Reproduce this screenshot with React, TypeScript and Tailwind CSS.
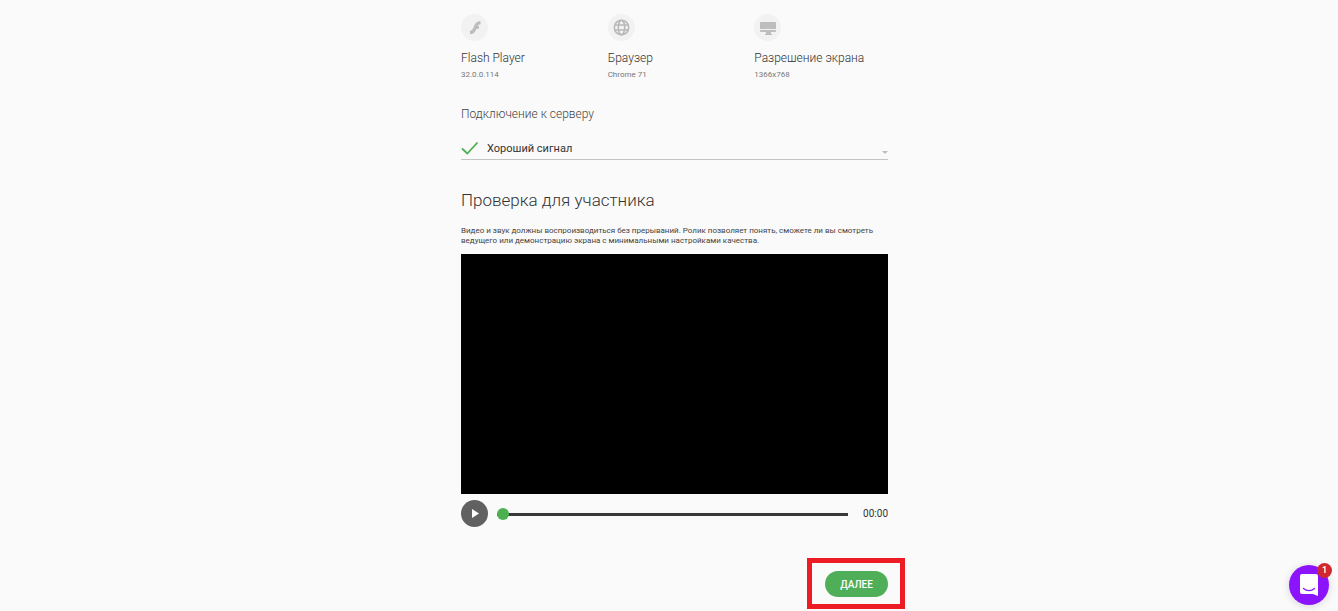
import { useState, type ReactNode } from 'react';

interface SystemItem {
    title: string;
    value: string;
    icon: ReactNode;
}

const systemItems: SystemItem[] = [
    {
        title: 'Flash Player',
        value: '32.0.0.114',
        icon: (
            <svg width="27" height="27" viewBox="0 0 27 27" fill="none" aria-hidden="true">
                <path d="M19.500 8.600c-3.300.2-4.500 2.300-5.400 5.200-.9 2.500-1.900 4.500-5.100 4.800" stroke="#bdbdbd" strokeWidth="3.400" />
                <path d="M13 13.400h5" stroke="#bdbdbd" strokeWidth="2.800" />
            </svg>
        ),
    },
    {
        title: 'Браузер',
        value: 'Chrome 71',
        icon: (
            <svg width="27" height="27" viewBox="0 0 27 27" fill="none" stroke="#b8b8b8" strokeWidth="1.600" aria-hidden="true">
                <circle cx="13.500" cy="13.500" r="7.200" />
                <ellipse cx="13.500" cy="13.500" rx="3.200" ry="7.200" />
                <path d="M7 11h13M7 16h13" />
            </svg>
        ),
    },
    {
        title: 'Разрешение экрана',
        value: '1366x768',
        icon: (
            <svg width="27" height="27" viewBox="0 0 27 27" fill="#bdbdbd" aria-hidden="true">
                <path d="M6 9a1 1 0 0 1 1-1h14a1 1 0 0 1 1 1v6H6z" />
                <path d="M6 16h16v1a1 1 0 0 1-1 1h-4v2h1v1h-7v-1h1v-2H7a1 1 0 0 1-1-1z" />
            </svg>
        ),
    },
];

function SystemInfo() {
    return (
        <div className="grid grid-cols-3 gap-[13px]">
            {systemItems.map((item) => (
                <div key={item.title}>
                    <div className="size-[27px] rounded-full bg-[#f2f2f2]">{item.icon}</div>
                    <div className="mt-2 text-[12px] leading-[18px] font-light whitespace-nowrap text-[#333]">{item.title}</div>
                    <div className="mt-[3px] text-[8px] leading-[10px] text-[#777]">{item.value}</div>
                </div>
            ))}
        </div>
    );
}

function ServerSelect() {
    return (
        <div className="mt-[25px]">
            <label htmlFor="server" className="block text-[12px] leading-[18px] font-light text-[#444]">
                Подключение к серверу
            </label>
            <div className="relative mt-4 border-b border-[#c4c4c4]">
                <svg className="pointer-events-none absolute top-[2px] left-0" width="18" height="14" viewBox="0 0 18 14" fill="none" aria-hidden="true">
                    <path d="M1 7.500 6.300 12.500 16.500 1.500" stroke="#4caf50" strokeWidth="1.800" />
                </svg>
                <select id="server" className="block h-5 w-full appearance-none bg-transparent pl-[26px] text-[11px] text-[#333] outline-none">
                    <option>Хороший сигнал</option>
                </select>
                <svg className="pointer-events-none absolute right-0 bottom-[5px]" width="6" height="3" viewBox="0 0 6 3" fill="#bdbdbd" aria-hidden="true">
                    <path d="M0 0h6L3 3z" />
                </svg>
            </div>
        </div>
    );
}

function Player() {
    const [position, setPosition] = useState(0);

    return (
        <div>
            <div className="mt-2 h-60 bg-black" />
            <div className="mt-[6px] flex items-center">
                <button type="button" aria-label="Воспроизвести" className="size-[27px] shrink-0 rounded-full bg-[#616161]">
                    <svg width="27" height="27" viewBox="0 0 27 27" fill="#fff" aria-hidden="true">
                        <path d="M11 9v9l7-4.500z" />
                    </svg>
                </button>
                <input
                    type="range"
                    aria-label="Позиция"
                    min={0}
                    max={100}
                    value={position}
                    onChange={(e) => setPosition(Number(e.target.value))}
                    className="mt-px ml-[9px] h-3 min-w-0 flex-1 appearance-none bg-transparent [&::-webkit-slider-runnable-track]:h-[3px] [&::-webkit-slider-runnable-track]:bg-[#383838] [&::-webkit-slider-thumb]:mt-[-5px] [&::-webkit-slider-thumb]:size-3 [&::-webkit-slider-thumb]:appearance-none [&::-webkit-slider-thumb]:rounded-full [&::-webkit-slider-thumb]:bg-[#4caf50]"
                />
                <span className="ml-[15px] text-[10px] leading-3 text-[#333]">00:00</span>
            </div>
        </div>
    );
}

function ChatButton() {
    return (
        <button type="button" aria-label="Открыть чат" className="fixed right-[9px] bottom-[6px] size-10 rounded-full bg-[#8c14fc] shadow-[0_1px_8px_rgba(0,0,0,0.15)]">
            <svg width="40" height="40" viewBox="0 0 40 40" fill="none" aria-hidden="true">
                <path d="M13 9h14a2 2 0 0 1 2 2v20l-5-2H13a2 2 0 0 1-2-2V11a2 2 0 0 1 2-2z" fill="#fff" />
                <path d="M14.500 23.500c3.200 2.700 7.800 2.700 11 0" stroke="#8c14fc" strokeWidth="1.300" strokeLinecap="round" />
            </svg>
            <span className="absolute -top-[2px] -right-[3px] size-[15px] rounded-full bg-[#d0282e] text-center text-[9px] leading-[14px] font-bold text-white">
                1
            </span>
        </button>
    );
}

export default function App() {
    return (
        <div className="min-h-screen bg-[#fafafa] pt-[14px] pl-[11px] font-['Roboto','Noto_Sans',sans-serif]">
            <main className="mx-auto w-full max-w-[427px]">
                <SystemInfo />
                <ServerSelect />

                <h2 className="mt-7 text-[17px] leading-6 font-light text-[#333]">Проверка для участника</h2>
                <p className="mt-[14px] text-[8px] leading-[10px] text-[#444]">
                    Видео и звук должны воспроизводиться без прерываний. Ролик позволяет понять, сможете ли вы смотреть
                    ведущего или демонстрацию экрана с минимальными настройками качества.
                </p>
                <Player />

                <div className="mt-11 flex justify-end">
                    <div className="relative">
                        <button type="button" className="block h-[26px] w-[63px] rounded-full bg-[#4fae58] text-[10px] font-medium text-white">
                            ДАЛЕЕ
                        </button>
                        <div className="pointer-events-none absolute -top-[13px] -right-[17px] -bottom-3 -left-[18px] border-[5px] border-[#ed1c24]" />
                    </div>
                </div>
            </main>
            <ChatButton />
        </div>
    );
}
